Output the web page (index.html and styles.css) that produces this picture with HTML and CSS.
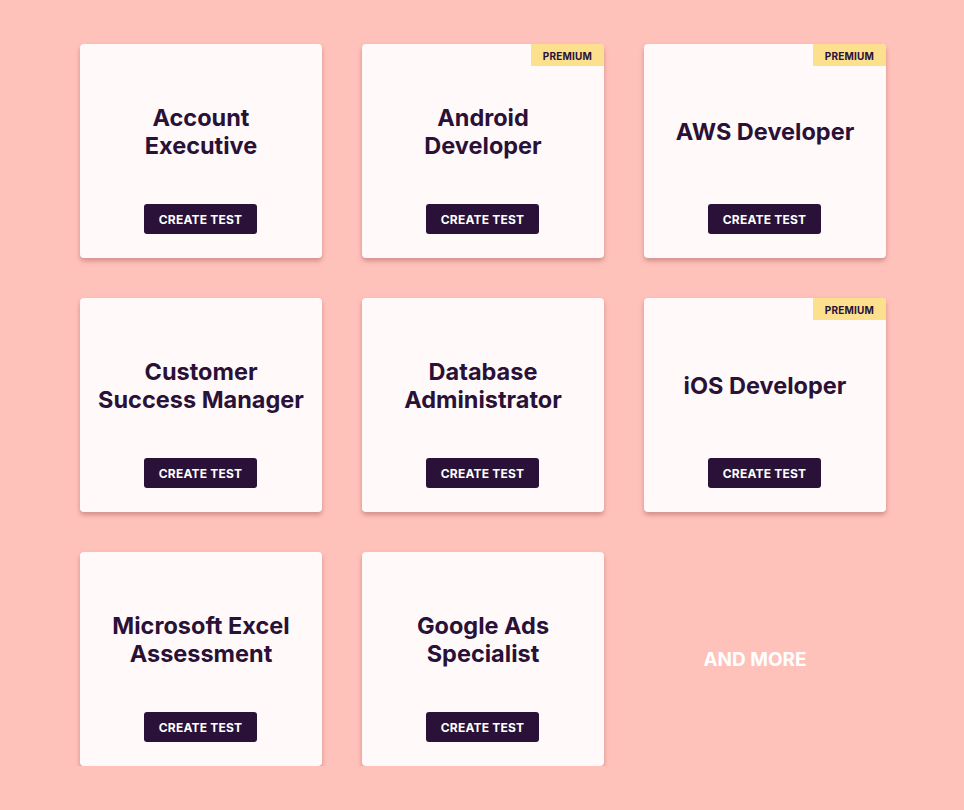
FILE: index.html
```html
<!DOCTYPE html>
<html>
<head>
<meta charset="utf-8">
<link rel="stylesheet" href="styles.css">
</head>
<body>
<div class="grid">
  <div class="card"><div class="title">Account<br>Executive</div><div class="btn">CREATE TEST</div></div>
  <div class="card"><span class="badge">PREMIUM</span><div class="title">Android<br>Developer</div><div class="btn">CREATE TEST</div></div>
  <div class="card"><span class="badge">PREMIUM</span><div class="title">AWS Developer</div><div class="btn">CREATE TEST</div></div>
  <div class="card"><div class="title">Customer<br>Success Manager</div><div class="btn">CREATE TEST</div></div>
  <div class="card"><div class="title">Database<br>Administrator</div><div class="btn">CREATE TEST</div></div>
  <div class="card"><span class="badge">PREMIUM</span><div class="title">iOS Developer</div><div class="btn">CREATE TEST</div></div>
  <div class="card"><div class="title">Microsoft Excel<br>Assessment</div><div class="btn">CREATE TEST</div></div>
  <div class="card"><div class="title">Google Ads<br>Specialist</div><div class="btn">CREATE TEST</div></div>
  <div class="more">AND MORE</div>
</div>
</body>
</html>
```
FILE: styles.css
```css
html, body {
  margin: 0;
  padding: 0;
  background: #ffc2ba;
  font-family: Inter, "Noto Sans", sans-serif;
}
.grid {
  display: grid;
  grid-template-columns: repeat(3, 242px);
  grid-auto-rows: 214px;
  gap: 40px;
  padding: 44px 0 0 80px;
}
.card {
  position: relative;
  background: #fffaf9;
  border-radius: 4px;
  box-shadow: 0 3px 5px rgba(120, 50, 50, 0.35);
  display: flex;
  flex-direction: column;
  align-items: center;
  padding: 24px 0 24px;
  box-sizing: border-box;
}
.title {
  flex: 1;
  display: flex;
  align-items: center;
  justify-content: center;
  text-align: center;
  font-size: 23.5px;
  line-height: 28px;
  font-weight: 700;
  color: #2a1137;
  margin-bottom: 8px;
}
.btn {
  width: 113px;
  height: 30px;
  margin-right: 1px;
  background: #2a1137;
  color: #fff;
  border-radius: 3px;
  font-size: 12px;
  font-weight: 700;
  letter-spacing: 0.2px;
  display: flex;
  align-items: center;
  justify-content: center;
  padding-top: 1px;
  box-sizing: border-box;
}
.badge {
  position: absolute;
  top: 0;
  right: 0;
  width: 73px;
  height: 22px;
  background: #fde08e;
  color: #2a1137;
  font-size: 10px;
  font-weight: 700;
  letter-spacing: 0.2px;
  display: flex;
  align-items: center;
  justify-content: center;
  padding-top: 1px;
  box-sizing: border-box;
  border-radius: 0 4px 0 0;
}
.more {
  display: flex;
  align-items: center;
  justify-content: center;
  padding-right: 20px;
  color: #fff;
  font-size: 19px;
  font-weight: 700;
}
```
